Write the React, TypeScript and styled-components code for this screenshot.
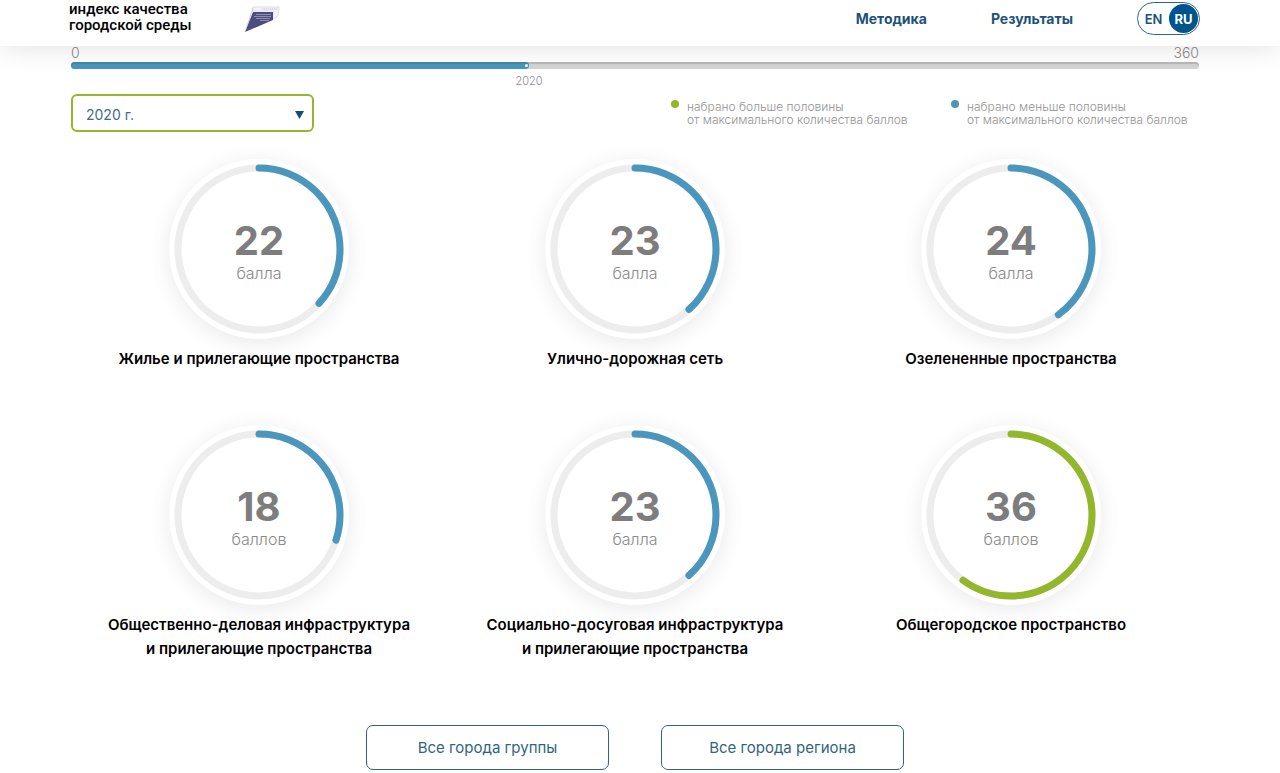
import React from "react";
import styled, { createGlobalStyle } from "styled-components";

const blue = "#4a96bd";
const green = "#92b72b";
const navy = "#00548c";

const GlobalStyle = createGlobalStyle`
  *, *::before, *::after { box-sizing: border-box; }
  body {
    margin: 0;
    background: #fff;
    color: #000;
    font-family: Inter, Roboto, sans-serif;
  }
`;

const Header = styled.header`
  position: relative;
  display: flex;
  align-items: flex-start;
  height: 46px;
  padding: 0 80px 0 69px;
  background: #fff;
  box-shadow: 0 0 30px rgba(0, 0, 0, 0.13);
`;

const Brand = styled.a`
  margin-top: 1px;
  color: #000;
  font: 500 15px/16px Roboto, sans-serif;
  text-decoration: none;
`;

const Emblem = styled.svg`
  width: 36px;
  height: 28px;
  margin: 5px 0 0 52px;
`;

const Nav = styled.nav`
  display: flex;
  align-items: center;
  gap: 64px;
  height: 37px;
  margin-left: auto;
`;

const NavLink = styled.a`
  color: #1c5279;
  font-size: 14px;
  font-weight: 700;
  text-decoration: none;
`;

const Languages = styled.div`
  display: flex;
  align-items: center;
  justify-content: flex-end;
  width: 63px;
  height: 33px;
  border: 1px solid #2b6690;
  border-radius: 17px;
`;

const Language = styled.button<{ $active?: boolean }>`
  display: flex;
  align-items: center;
  justify-content: center;
  width: 29px;
  height: 29px;
  margin-right: 1px;
  padding: 0;
  border: 0;
  border-radius: 50%;
  background: ${(p) => (p.$active ? navy : "transparent")};
  color: ${(p) => (p.$active ? "#fff" : "#1c5279")};
  font: ${(p) => (p.$active ? 700 : 600)} 13px/16px Inter, sans-serif;
`;

const Content = styled.main`
  padding: 0 81px 0 71px;
`;

const Scale = styled.div`
  display: flex;
  justify-content: space-between;
  height: 16px;
  color: #8a8a8a;
  font-size: 14px;
  font-weight: 300;
  line-height: 14px;
`;

const Track = styled.div`
  height: 7px;
  border-radius: 4px;
  background: #d4d4d4;
  box-shadow: inset 0 2px 1px rgba(0, 0, 0, 0.14);
`;

const Fill = styled.div`
  display: flex;
  align-items: center;
  justify-content: flex-end;
  height: 7px;
  padding-right: 1px;
  border-radius: 4px;
  background: ${blue};
  box-shadow: inset 0 2px 1px rgba(0, 0, 0, 0.1);
`;

const Knob = styled.span`
  width: 3px;
  height: 3px;
  border-radius: 50%;
  background: #fff;
`;

const MarkRow = styled.div`
  display: flex;
`;

const YearMark = styled.div`
  display: flex;
  justify-content: center;
  height: 25px;
  padding-top: 5px;
  color: #8a8a8a;
  font-size: 11px;
  font-weight: 300;
  line-height: 14px;
`;

const Filters = styled.div`
  display: flex;
  justify-content: space-between;
`;

const SelectBox = styled.div`
  display: grid;
  width: 243px;
  height: 38px;
`;

const YearSelect = styled.select`
  grid-area: 1 / 1;
  appearance: none;
  padding: 4px 36px 0 13px;
  border: 2px solid ${green};
  border-radius: 6px;
  background: #fff;
  color: #3f6c8c;
  font: 400 14px/20px Inter, sans-serif;
`;

const Arrow = styled.svg`
  grid-area: 1 / 1;
  place-self: center end;
  width: 9px;
  height: 8px;
  margin: 4px 10px 0 0;
  pointer-events: none;
`;

const Legend = styled.ul`
  display: flex;
  margin: 0;
  padding: 0;
  list-style: none;
`;

const LegendItem = styled.li`
  display: flex;
  gap: 8px;
  width: 280px;
  padding-top: 6px;
  color: #929292;
  font-size: 12px;
  font-weight: 300;
  line-height: 13px;
  white-space: nowrap;

  &:last-child { width: 248px; }
`;

const Dot = styled.span<{ $color: string }>`
  width: 8px;
  height: 8px;
  border-radius: 50%;
  background: ${(p) => p.$color};
`;

const Scores = styled.div`
  display: grid;
  grid-template-columns: repeat(3, 1fr);
  row-gap: 30px;
  padding-top: 27px;
`;

const Score = styled.section`
  display: flex;
  flex-direction: column;
  align-items: center;
  min-height: 236px;
`;

const Dial = styled.div`
  display: grid;
  width: 180px;
  height: 180px;
  border-radius: 50%;
  background: #fff;
  box-shadow: 0 4px 22px rgba(0, 0, 0, 0.09);
`;

const Ring = styled.svg`
  grid-area: 1 / 1;
  width: 180px;
  height: 180px;
`;

const Reading = styled.div`
  grid-area: 1 / 1;
  display: flex;
  flex-direction: column;
  align-items: center;
  justify-content: center;
  padding-top: 4px;
`;

const Points = styled.strong`
  color: #7d7d7d;
  font-size: 40px;
  font-weight: 700;
  line-height: 44px;
`;

const Unit = styled.span`
  color: #8a8a8a;
  font-size: 16px;
  font-weight: 300;
  line-height: 20px;
`;

const ScoreTitle = styled.h2`
  margin: 8px 0 0;
  font-size: 15px;
  font-weight: 600;
  line-height: 24px;
  text-align: center;
  white-space: pre-line;
`;

const Actions = styled.div`
  display: flex;
  justify-content: center;
  gap: 52px;
  padding-top: 64px;
`;

const ActionButton = styled.button`
  width: 243px;
  height: 45px;
  border: 1px solid #2f6580;
  border-radius: 7px;
  background: #fff;
  color: #33647f;
  font: 400 15px/20px Inter, sans-serif;
`;

const MAX_POINTS = 60;
const RADIUS = 81;
const LENGTH = 2 * Math.PI * RADIUS;

const scores = [
  { points: 22, unit: "балла", title: "Жилье и прилегающие пространства" },
  { points: 23, unit: "балла", title: "Улично-дорожная сеть" },
  { points: 24, unit: "балла", title: "Озелененные пространства" },
  { points: 18, unit: "баллов", title: "Общественно-деловая инфраструктура\nи прилегающие пространства" },
  { points: 23, unit: "балла", title: "Социально-досуговая инфраструктура\nи прилегающие пространства" },
  { points: 36, unit: "баллов", title: "Общегородское пространство" },
];

function ScoreCard({ points, unit, title }: { points: number; unit: string; title: string }) {
  return (
    <Score>
      <Dial>
        <Ring viewBox="0 0 180 180" fill="none" strokeWidth="7" aria-hidden="true">
          <circle cx="90" cy="90" r={RADIUS} stroke="#ededed" />
          <circle
            cx="90"
            cy="90"
            r={RADIUS}
            stroke={points * 2 > MAX_POINTS ? green : blue}
            strokeLinecap="round"
            strokeDasharray={`${(LENGTH * points) / MAX_POINTS} ${LENGTH}`}
            transform="rotate(-90 90 90)"
          />
        </Ring>
        <Reading>
          <Points>{points}</Points>
          <Unit>{unit}</Unit>
        </Reading>
      </Dial>
      <ScoreTitle>{title}</ScoreTitle>
    </Score>
  );
}

export default function App() {
  const progress = 40.6;
  return (
    <>
      <GlobalStyle />
      <Header>
        <Brand href="#">
          индекс качества
          <br />
          городской среды
        </Brand>
        <Emblem viewBox="0 0 36 28" aria-hidden="true">
          <path d="M9 2h26l-1 9-5 3V6H8z" fill="#f5f5f8" stroke="#c9c9d6" strokeWidth=".6" />
          <path d="M9 7h20v8L1 27z" fill="#4c4c7e" />
          <path d="M1 27 9 3" stroke="#bcbccd" strokeWidth=".7" />
          <path d="M12 9.5h15M10 11.5h17M12 13.5h14M16 15.5h9" stroke="#aaaac5" strokeWidth=".7" />
          <path d="M18 4h15" stroke="#c4c4d0" strokeDasharray="1.5 .5" />
        </Emblem>
        <Nav>
          <NavLink href="#method">Методика</NavLink>
          <NavLink href="#results">Результаты</NavLink>
          <Languages>
            <Language>EN</Language>
            <Language $active>RU</Language>
          </Languages>
        </Nav>
      </Header>
      <Content>
        <Scale>
          <span>0</span>
          <span>360</span>
        </Scale>
        <Track>
          <Fill style={{ width: `${progress}%` }}>
            <Knob />
          </Fill>
        </Track>
        <MarkRow>
          <YearMark style={{ width: `${progress * 2}%` }}>2020</YearMark>
        </MarkRow>
        <Filters>
          <SelectBox>
            <YearSelect aria-label="Год" defaultValue="2020">
              <option value="2020">2020 г.</option>
            </YearSelect>
            <Arrow viewBox="0 0 9 8" aria-hidden="true">
              <path d="M0 0h9L4.500 8z" fill="#0f4f7c" />
            </Arrow>
          </SelectBox>
          <Legend>
            <LegendItem>
              <Dot $color={green} />
              <span>
                набрано больше половины
                <br />
                от максимального количества баллов
              </span>
            </LegendItem>
            <LegendItem>
              <Dot $color={blue} />
              <span>
                набрано меньше половины
                <br />
                от максимального количества баллов
              </span>
            </LegendItem>
          </Legend>
        </Filters>
        <Scores>
          {scores.map((score) => (
            <ScoreCard key={score.title} {...score} />
          ))}
        </Scores>
        <Actions>
          <ActionButton>Все города группы</ActionButton>
          <ActionButton>Все города региона</ActionButton>
        </Actions>
      </Content>
    </>
  );
}
